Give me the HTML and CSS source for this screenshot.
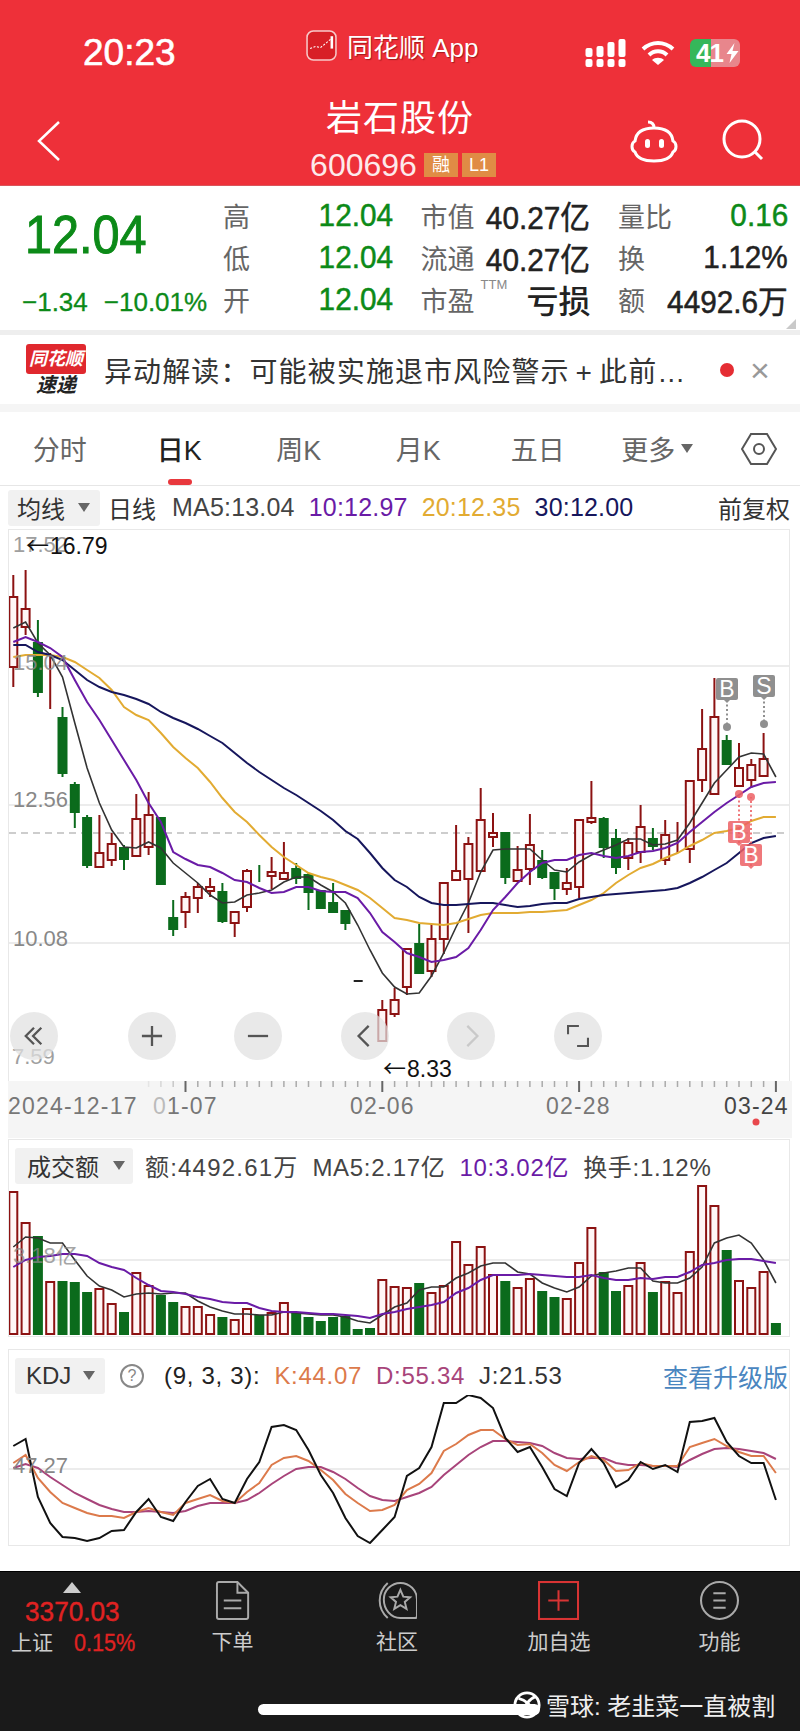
FILE: index.html
```html
<!DOCTYPE html>
<html lang="zh-CN">
<head>
    <meta charset="UTF-8">
    <meta name="viewport" content="width=device-width, initial-scale=1.0">
    <title>岩石股份 600696</title>
    <link rel="stylesheet" href="styles.css">
</head>
<body>
    <div class="page">
        <header class="top">
            <div class="status">
                <span class="time">20:23</span>
                <div class="app-tag">
                    <svg class="app-icon" viewBox="0 0 30 30">
                        <rect x="1" y="1" width="28" height="28" rx="6" fill="#d81f26" stroke="#f7c9c9" stroke-width="1.5"/>
                        <path d="M4 18l5-2 5 1 5-4 6-5" fill="none" stroke="#fff" stroke-width="1" stroke-dasharray="2 1.5"/>
                        <path d="M25 6v12" stroke="#fff" stroke-width="2.5"/>
                    </svg>
                    <span>同花顺 App</span>
                </div>
                <div class="status-icons">
                    <svg class="signal" viewBox="0 0 40 28" fill="#fff">
                        <rect x="0" y="9" width="7" height="9" rx="2"/>
                        <rect x="11" y="7" width="7" height="11" rx="2"/>
                        <rect x="22" y="3" width="7" height="15" rx="2"/>
                        <rect x="33" y="0" width="7" height="18" rx="2"/>
                        <rect x="0" y="20" width="7" height="8" rx="2"/>
                        <rect x="11" y="20" width="7" height="8" rx="2"/>
                        <rect x="22" y="20" width="7" height="8" rx="2"/>
                        <rect x="33" y="20" width="7" height="8" rx="2"/>
                    </svg>
                    <svg class="wifi" viewBox="0 0 34 26" fill="none" stroke="#fff" stroke-width="4">
                        <path d="M2 9c9-8 21-8 30 0"/>
                        <path d="M8 15c5-5 13-5 18 0"/>
                        <path d="M17 25l-6-5c3-3 9-3 12 0z" fill="#fff" stroke="none"/>
                    </svg>
                    <div class="battery">
                        <span class="battery-num">41</span>
                        <svg class="bolt" viewBox="0 0 12 20"><path d="M8 0L0 11h5l-2 9 9-12H6z" fill="#fff"/></svg>
                    </div>
                </div>
            </div>
            <div class="nav">
                <svg class="back" viewBox="0 0 24 40" fill="none" stroke="#fff" stroke-width="2.5"><path d="M22 1L2 20l20 19"/></svg>
                <div class="title-block">
                    <div class="title">岩石股份</div>
                    <div class="code-row">
                        <span class="code">600696</span>
                        <span class="badge">融</span>
                        <span class="badge">L1</span>
                    </div>
                </div>
                <div class="nav-actions">
                    <svg class="robot" viewBox="0 0 48 44" fill="none" stroke="#fff" stroke-width="3">
                        <path d="M24 9C11 9 6 14 5 22c-4 2-4 9 0 11 2 6 9 9 19 9s17-3 19-9c4-2 4-9 0-11-1-8-6-13-19-13z"/>
                        <path d="M24 9c0-4-2-6-6-6"/>
                        <rect x="15" y="20" width="5" height="9" rx="2.5" fill="#fff" stroke="none"/>
                        <rect x="29" y="20" width="5" height="9" rx="2.5" fill="#fff" stroke="none"/>
                    </svg>
                    <svg class="search" viewBox="0 0 42 42" fill="none" stroke="#fff" stroke-width="3">
                        <circle cx="20" cy="20" r="18"/>
                        <path d="M33 33l7 7"/>
                    </svg>
                </div>
            </div>
        </header>

        <section class="quote">
            <div class="price-block">
                <div class="price">12.04</div>
                <div class="change"><span>−1.34</span><span>−10.01%</span></div>
            </div>
            <div class="stat-grid">
                <div class="stat"><span class="stat-label">高</span><span class="stat-value down">12.04</span></div>
                <div class="stat"><span class="stat-label">市值</span><span class="stat-value">40.27亿</span></div>
                <div class="stat"><span class="stat-label">量比</span><span class="stat-value down">0.16</span></div>
                <div class="stat"><span class="stat-label">低</span><span class="stat-value down">12.04</span></div>
                <div class="stat"><span class="stat-label">流通</span><span class="stat-value">40.27亿</span></div>
                <div class="stat"><span class="stat-label">换</span><span class="stat-value">1.12%</span></div>
                <div class="stat"><span class="stat-label">开</span><span class="stat-value down">12.04</span></div>
                <div class="stat"><span class="stat-label">市盈<sup class="ttm">TTM</sup></span><span class="loss">亏损</span></div>
                <div class="stat"><span class="stat-label">额</span><span class="stat-value">4492.6万</span></div>
            </div>
        </section>

        <section class="notice">
            <div class="flash-logo">
                <span class="flash-top">同花顺</span>
                <span class="flash-bottom">速递</span>
            </div>
            <div class="notice-text">异动解读：可能被实施退市风险警示<span class="plus">+</span>此前…</div>
            <span class="notice-dot"></span>
            <span class="notice-close">×</span>
        </section>

        <nav class="tabs">
            <div class="tab">分时</div>
            <div class="tab active">日K</div>
            <div class="tab">周K</div>
            <div class="tab">月K</div>
            <div class="tab">五日</div>
            <div class="tab">更多<i class="caret"></i></div>
            <div class="tab">
                <svg class="hex" viewBox="0 0 36 32" fill="none" stroke="#555" stroke-width="2">
                    <path d="M10 1h16l9 15-9 15H10L1 16z"/>
                    <circle cx="18" cy="16" r="5"/>
                </svg>
            </div>
        </nav>

        <div class="ma-row">
            <div class="picker ma-picker">均线<i class="caret"></i></div>
            <span class="ma-period">日线</span>
            <span class="ma ma5">MA5:13.04</span>
            <span class="ma ma10">10:12.97</span>
            <span class="ma ma20">20:12.35</span>
            <span class="ma ma30">30:12.00</span>
            <span class="adjust">前复权</span>
        </div>

        <div class="panel price-panel">
            <svg id="price-chart" class="chart" viewBox="9 530 780 550" width="780" height="550"></svg>
            <div class="pan-buttons">
                <div class="pan-btn first">
                    <svg viewBox="0 0 24 24"><path d="M12 3L3 12l9 9M20 3l-9 9 9 9"/></svg>
                </div>
                <div class="pan-btn"><svg viewBox="0 0 24 24"><path d="M1 12h22M12 1v22"/></svg></div>
                <div class="pan-btn"><svg viewBox="0 0 24 24"><path d="M1 12h22"/></svg></div>
                <div class="pan-btn"><svg viewBox="0 0 24 24"><path d="M16 1L5 12l11 11"/></svg></div>
                <div class="pan-btn off"><svg viewBox="0 0 24 24"><path d="M8 1l11 11L8 23"/></svg></div>
                <div class="pan-btn"><svg viewBox="0 0 24 24"><path d="M1 10V1h12M23 14v9H11"/></svg></div>
            </div>
        </div>
        <svg id="date-axis" class="date-axis" viewBox="8 1081 784 57" width="784" height="57"></svg>

        <div class="panel vol-panel">
            <div class="panel-head">
                <div class="picker vol-picker">成交额<i class="caret"></i></div>
                <span class="ind ind-wide">额:4492.61万</span>
                <span class="ind">MA5:2.17亿</span>
                <span class="ind ma10">10:3.02亿</span>
                <span class="ind">换手:1.12%</span>
            </div>
            <svg id="vol-chart" class="chart" viewBox="9 1185 780 151" width="780" height="151"></svg>
        </div>

        <div class="panel kdj-panel">
            <div class="panel-head">
                <div class="picker kdj-picker">KDJ<i class="caret"></i></div>
                <span class="help">?</span>
                <span class="ind kdj-params">(9, 3, 3):</span>
                <span class="ind kdj-k">K:44.07</span>
                <span class="ind kdj-d">D:55.34</span>
                <span class="ind kdj-j">J:21.53</span>
                <span class="upgrade">查看升级版</span>
            </div>
            <svg id="kdj-chart" class="chart" viewBox="9 1395 780 149" width="780" height="149"></svg>
        </div>

        <footer class="bottom">
            <div class="index-block">
                <i class="index-arrow"></i>
                <div class="index-value">3370.03</div>
                <div class="index-row"><span class="index-name">上证</span><span class="index-pct">0.15%</span></div>
            </div>
            <div class="bottom-tab">
                <svg viewBox="0 0 36 40" fill="none" stroke="#aaa" stroke-width="2">
                    <path d="M2 3a2 2 0 0 1 2-2h19l11 11v25a2 2 0 0 1-2 2H4a2 2 0 0 1-2-2z"/>
                    <path d="M23 1v11h11M9 20h18M9 28h18"/>
                </svg>
                <span>下单</span>
            </div>
            <div class="bottom-tab">
                <svg viewBox="0 0 42 40" fill="none" stroke="#aaa" stroke-width="2">
                    <path d="M11 2C0 12 0 28 11 38"/>
                    <path d="M7 19a17 17 0 0 1 34 0v17a2 2 0 0 1-2 2H24C14 38 7 29 7 19z"/>
                    <path d="M24 9l3 7 7 .7-5.5 4.8 1.8 7.1-6.3-3.8-6.3 3.8 1.8-7.1L14 16.700l7-.7z"/>
                </svg>
                <span>社区</span>
            </div>
            <div class="bottom-tab">
                <svg viewBox="0 0 40 38" fill="none" stroke="#d83434" stroke-width="2">
                    <rect x="1" y="1" width="38" height="36"/>
                    <path d="M20 9v20M10 19h20"/>
                </svg>
                <span>加自选</span>
            </div>
            <div class="bottom-tab">
                <svg viewBox="0 0 38 38" fill="none" stroke="#aaa" stroke-width="2">
                    <circle cx="19" cy="19" r="18"/>
                    <path d="M13 12h12M13 19h12M13 26h12"/>
                </svg>
                <span>功能</span>
            </div>
            <div class="home-bar"></div>
            <div class="watermark">
                <svg viewBox="0 0 30 30" fill="none" stroke="#fff" stroke-width="3">
                    <circle cx="15" cy="15" r="13"/>
                    <path d="M6 8c8 2 14 8 18 16M24 6C18 8 12 16 9 24"/>
                </svg>
                <span>雪球: 老韭菜一直被割</span>
            </div>
        </footer>
    </div>
    <script src="chart.js"></script>
</body>
</html>
```

FILE: styles.css
```css
* {
    box-sizing: border-box;
}
body {
    margin: 0;
    background-color: #fff;
    font-family: "Liberation Sans", "Noto Sans CJK SC", sans-serif;
    color: #222;
}
.page {
    width: 800px;
    height: 1731px;
    overflow: hidden;
    position: relative;
}

/* red header */
.top {
    height: 186px;
    background-color: #ee3039;
    color: #fff;
    border-bottom: 1px solid #d9555b;
}
.status {
    height: 86px;
    display: grid;
    grid-template-columns: 306px 279px 1fr;
}
.time {
    padding: 33px 0 0 83px;
    font-size: 37px;
    line-height: 40px;
    -webkit-text-stroke: 0.6px #fff;
}
.app-tag {
    display: flex;
    align-items: center;
    height: 30px;
    margin-top: 30px;
    gap: 10px;
    font-size: 26px;
    text-shadow: 1px 1px 1px rgba(90, 0, 0, 0.5);
}
.app-icon {
    width: 31px;
    height: 31px;
}
.status-icons {
    display: flex;
    align-items: flex-start;
    padding-top: 39px;
}
.signal {
    width: 41px;
    height: 28px;
}
.wifi {
    width: 34px;
    height: 26px;
    margin: 1px 15px 0;
}
.battery {
    width: 50px;
    height: 28px;
    border-radius: 6px;
    background: linear-gradient(to right, #35b75a 21px, #e8868c 21px);
    display: flex;
    align-items: center;
    padding-left: 6px;
    gap: 3px;
}
.battery-num {
    font-size: 26px;
    font-weight: bold;
    letter-spacing: -1px;
}
.bolt {
    width: 13px;
    height: 20px;
}
.nav {
    height: 99px;
    display: grid;
    grid-template-columns: 1fr auto 1fr;
}
.back {
    width: 24px;
    height: 40px;
    margin: 35px 0 0 37px;
}
.title-block {
    padding-top: 12px;
    text-align: center;
}
.title {
    font-size: 36px;
    line-height: 42px;
    letter-spacing: 1px;
}
.code-row {
    display: flex;
    align-items: center;
    margin-top: 11px;
    gap: 4px;
    margin-left: 6px;
}
.code {
    font-size: 32px;
    line-height: 28px;
    opacity: 0.9;
    margin-right: 3px;
}
.badge {
    width: 34px;
    height: 24px;
    background-color: #e08c45;
    font-size: 18px;
    line-height: 24px;
    text-align: center;
}
.nav-actions {
    display: flex;
    justify-content: flex-end;
    align-items: flex-start;
    padding: 33px 36px 0 0;
    gap: 44px;
}
.robot {
    width: 48px;
    height: 44px;
}
.search {
    width: 42px;
    height: 42px;
}

/* quote */
.quote {
    position: relative;
    height: 149px;
    display: flex;
    border-bottom: 5px solid #eee;
}
.quote::after {
    content: "";
    position: absolute;
    right: 4px;
    bottom: 1px;
    border-left: 10px solid transparent;
    border-bottom: 10px solid #c9c9c9;
}
.price-block {
    width: 223px;
    padding: 25px 0 0 22px;
}
.price {
    font-size: 54px;
    line-height: 46px;
    color: #0c8a18;
    margin-left: 3px;
    -webkit-text-stroke: 1px #0c8a18;
    transform: scaleX(0.9);
    transform-origin: left;
}
.change {
    display: flex;
    gap: 16px;
    margin-top: 29px;
    font-size: 26px;
    line-height: 32px;
    color: #0c8a18;
    white-space: nowrap;
    -webkit-text-stroke: 0.3px #0c8a18;
}
.stat-grid {
    display: grid;
    grid-template-columns: repeat(3, 170px);
    grid-auto-rows: 42px;
    column-gap: 27.5px;
    padding-top: 8px;
}
.stat {
    display: flex;
    justify-content: space-between;
    align-items: center;
}
.stat-label {
    font-size: 27px;
    color: #666;
    white-space: nowrap;
    position: relative;
}
.ttm {
    position: absolute;
    left: 60px;
    top: -3px;
    font-size: 13px;
    line-height: 16px;
    color: #888;
}
.stat-value {
    font-size: 32px;
    white-space: nowrap;
    -webkit-text-stroke: 0.5px #222;
    transform: scaleX(0.93);
    transform-origin: right;
}
.stat-value.down {
    color: #0c8a18;
    -webkit-text-stroke: 0.5px #0c8a18;
}
.loss {
    font-size: 32px;
    font-weight: 500;
}

/* notice strip */
.notice {
    height: 77px;
    display: flex;
    align-items: center;
    padding-left: 26px;
    border-bottom: 8px solid #f5f5f5;
}
.flash-logo {
    width: 60px;
    display: flex;
    flex-direction: column;
    align-items: center;
    margin-right: 18px;
}
.flash-top {
    width: 60px;
    height: 30px;
    background-color: #e0282e;
    border-radius: 3px;
    color: #fff;
    font-size: 18px;
    font-style: italic;
    font-weight: bold;
    line-height: 30px;
    text-align: center;
    white-space: nowrap;
}
.flash-bottom {
    font-size: 20px;
    font-style: italic;
    font-weight: bold;
    line-height: 22px;
}
.notice-text {
    width: 600px;
    font-size: 28px;
    letter-spacing: 1.1px;
    white-space: nowrap;
    color: #333;
}
.plus {
    margin: 0 6px;
}
.notice-dot {
    width: 14px;
    height: 14px;
    border-radius: 50%;
    background-color: #e52d33;
    margin-left: 16px;
}
.notice-close {
    font-size: 34px;
    line-height: 34px;
    color: #999;
    margin-left: 16px;
}

/* period tabs */
.tabs {
    height: 74px;
    display: grid;
    grid-template-columns: repeat(6, 119.5px) 83px;
    border-bottom: 1px solid #e6e6e6;
}
.tab {
    position: relative;
    display: flex;
    align-items: center;
    justify-content: center;
    font-size: 27px;
    color: #666;
}
.tab.active {
    color: #222;
    font-weight: 500;
}
.tab.active::after {
    content: "";
    position: absolute;
    left: 48px;
    bottom: 0;
    width: 24px;
    height: 6px;
    border-radius: 3px;
    background-color: #e8383d;
}
.hex {
    width: 36px;
    height: 32px;
}
.caret {
    display: inline-block;
    width: 0;
    height: 0;
    margin-left: 6px;
    border-left: 6px solid transparent;
    border-right: 6px solid transparent;
    border-top: 9px solid #666;
}

/* moving average legend */
.ma-row {
    height: 43px;
    display: flex;
    align-items: center;
    padding: 0 10px 0 8px;
    white-space: nowrap;
}
.picker {
    height: 36px;
    display: flex;
    align-items: center;
    background-color: #f1f1f1;
    border-radius: 3px;
    font-size: 24px;
    color: #333;
}
.ma-picker {
    width: 92px;
    padding-left: 9px;
    justify-content: space-between;
    padding-right: 10px;
}
.ma-period {
    margin: 0 16px 0 8px;
    font-size: 24px;
    color: #333;
}
.ma {
    font-size: 25px;
    letter-spacing: 0.2px;
    margin-right: 14px;
}
.ma5 {
    color: #444;
}
.ma10 {
    color: #6a1ba6;
}
.ma20 {
    color: #e2ab32;
}
.ma30 {
    color: #16165c;
}
.adjust {
    margin-left: auto;
    font-size: 24px;
    color: #333;
}

/* chart panels */
.panel {
    position: relative;
    margin: 0 10px 0 8px;
    border: 1px solid #e8e8e8;
}
.chart {
    display: block;
}
.price-panel {
    height: 552px;
    border-bottom: none;
}
.pan-buttons {
    position: absolute;
    left: 1px;
    top: 482px;
    display: flex;
    gap: 58.5px;
}
.pan-btn {
    width: 48px;
    height: 48px;
    border-radius: 50%;
    background-color: rgba(224, 224, 224, 0.72);
    display: flex;
    align-items: center;
    justify-content: center;
}
.pan-btn.first {
    margin-right: 11px;
}
.pan-btn svg {
    width: 22px;
    height: 22px;
    fill: none;
    stroke: #555;
    stroke-width: 2.5;
}
.pan-btn.off svg {
    stroke: #c9c9c9;
}
.date-axis {
    display: block;
    margin-left: 8px;
    background-color: #f5f5f5;
}
.vol-panel {
    height: 198px;
    margin-top: 1px;
}
.kdj-panel {
    height: 197px;
    margin-top: 12px;
}
.panel-head {
    height: 45px;
    display: flex;
    align-items: center;
    padding: 6px 0 0 6px;
    white-space: nowrap;
}
.vol-picker {
    width: 118px;
    padding: 0 8px 0 12px;
    justify-content: space-between;
    margin-right: 12px;
}
.kdj-picker {
    width: 90px;
    padding: 0 10px 0 11px;
    justify-content: space-between;
    margin-right: 15px;
}
.ind {
    font-size: 24px;
    letter-spacing: 0.7px;
    color: #444;
    margin-right: 14px;
}
.ind-wide {
    letter-spacing: 1.2px;
}
.ind.ma10 {
    color: #6a1ba6;
}
.help {
    width: 24px;
    height: 24px;
    border: 2px solid #888;
    border-radius: 50%;
    font-size: 16px;
    line-height: 20px;
    text-align: center;
    color: #888;
    margin-right: 20px;
}
.kdj-params {
    color: #222;
}
.kdj-k {
    color: #dc7a4b;
}
.kdj-d {
    color: #a8447a;
}
.kdj-j {
    color: #333;
}
.upgrade {
    margin-left: auto;
    padding-right: 1px;
    font-size: 25px;
    color: #4a86c0;
}

/* svg chart text */
.axis-text {
    fill: #888;
    font-size: 22px;
}
.extreme-text {
    fill: #111;
    font-size: 23px;
}
.extreme-arrow {
    font-family: "Noto Sans CJK SC", sans-serif;
}
.marker-text {
    fill: #fff;
    font-size: 23px;
    text-anchor: middle;
}
.date-text {
    fill: #777;
    font-size: 23px;
    letter-spacing: 1.2px;
}
.date-text.current {
    fill: #444;
}

/* bottom bar */
.bottom {
    position: absolute;
    left: 0;
    top: 1571px;
    width: 800px;
    height: 160px;
    display: grid;
    grid-template-columns: 150px 165px 164px 160px 161px;
    align-items: start;
    background-color: #1a1a1a;
    border-top: 1px solid #000;
    color: #ccc;
}
.index-block {
    padding: 10px 0 0 11px;
}
.index-arrow {
    display: block;
    width: 0;
    height: 0;
    margin: 0 0 5px 52px;
    border-left: 9px solid transparent;
    border-right: 9px solid transparent;
    border-bottom: 11px solid #ccc;
}
.index-value {
    margin-left: 14px;
    font-size: 27px;
    line-height: 28px;
    color: #e02222;
    -webkit-text-stroke: 0.4px #e02222;
    white-space: nowrap;
    transform: scaleX(0.97);
    transform-origin: left;
}
.index-row {
    display: flex;
    align-items: center;
    margin-top: 3px;
    font-size: 21px;
    line-height: 28px;
}
.index-pct {
    margin-left: 21px;
    color: #e02222;
    font-size: 24px;
    -webkit-text-stroke: 0.3px #e02222;
    transform: scaleX(0.9);
    transform-origin: left;
}
.bottom-tab {
    display: flex;
    flex-direction: column;
    align-items: center;
    font-size: 21px;
    padding-top: 9px;
}
.bottom-tab svg {
    height: 39px;
    margin-bottom: 5px;
}
.home-bar {
    position: absolute;
    left: 258px;
    top: 132px;
    width: 282px;
    height: 11px;
    border-radius: 6px;
    background-color: #fff;
}
.watermark {
    position: absolute;
    left: 513px;
    top: 115px;
    display: flex;
    align-items: center;
    gap: 5px;
    font-size: 24px;
    color: #eee;
    white-space: nowrap;
}
.watermark svg {
    width: 28px;
    height: 28px;
}
```

FILE: chart.js
```js
// x position of a candle
function xAt(i) {
    return 13.3 + 12.3 * i;
}

var RED = "#8c1212";
var GREEN = "#0b6b1c";

// colour, high, low, body top, body bottom
var candles = [
    ["r",575,687,597,667],["r",570,635,609,627],["g",620,697,643,692],["r",653,709,702,702],
    ["g",707,777,718,773],["g",782,828,785,812],["g",815,868,818,865],["r",815,867,853,867],
    ["r",833,866,844,860],["g",845,870,848,859],["r",794,856,819,856],["r",792,855,815,847],
    ["g",818,884,818,884],["g",900,936,918,929],["r",892,928,897,912],["r",883,913,887,898],
    ["r",878,897,887,891],["g",883,923,892,921],["r",912,937,912,923],["r",869,912,871,907],
    ["g",865,882,876,876],["r",857,889,872,876],["r",842,880,873,879],["g",863,884,869,878],
    ["g",873,910,875,892],["g",891,908,891,908],["g",883,912,903,912],["g",911,930,911,923],
    ["k",981,981,981,981],["g",1033,1033,1033,1033],["r",1000,1041,1010,1041],["r",988,1017,1000,1014],
    ["r",949,995,949,987],["g",924,974,944,973],["r",924,977,939,971],["r",883,954,883,939],
    ["r",825,880,871,880],["r",837,933,844,879],["r",788,871,820,871],["r",813,847,833,837],
    ["g",833,884,833,877],["r",846,881,870,881],["r",814,885,845,869],["g",850,879,861,877],
    ["g",873,900,873,888],["r",868,895,883,889],["r",820,898,820,887],["r",781,824,818,822],
    ["g",817,858,819,847],["g",829,874,839,867],["r",838,870,843,858],["r",805,863,827,852],
    ["g",828,850,839,846],["r",820,865,835,860],["r",822,853,847,847],["r",781,863,781,849],
    ["r",709,792,749,780],["r",678,794,717,794],["g",735,764,741,764],["r",743,786,768,786],
    ["r",759,788,765,780],["r",733,776,759,776],["g",833,833,833,833]
];

var priceLines = [
    {color: "#333", width: 1.6, ys: [628,622,643,655,677,723,768,803,830,847,848,842,848,863,873,883,895,903,902,895,893,890,882,877,877,885,892,903,925,950,973,987,994,993,976,953,927,903,872,850,849,849,849,860,870,872,862,855,850,845,839,839,845,844,840,823,803,783,770,757,753,754,777]},
    {color: "#e2ab32", width: 2, ys: [657,655,655,655,657,662,670,678,690,707,715,720,733,747,758,768,782,798,812,822,835,847,857,865,873,877,880,885,890,898,908,918,920,923,924,925,923,919,915,913,913,913,912,912,911,910,905,900,893,883,875,868,864,858,853,846,840,833,831,828,821,817,817]},
    {color: "#16165c", width: 2, ys: [645,645,652,655,660,670,680,687,692,695,699,704,712,718,723,729,736,743,753,763,772,780,788,795,803,811,820,831,839,853,868,880,887,897,903,905,905,904,903,903,905,907,906,904,903,903,899,897,895,894,893,892,891,890,888,883,877,870,863,853,843,838,836]},
    {color: "#6a1ba6", width: 2, ys: [642,637,642,648,657,680,702,720,740,760,780,803,822,852,859,865,867,873,880,882,888,893,892,887,887,891,892,892,898,913,932,942,953,957,962,960,957,948,930,910,897,883,872,863,860,860,855,853,856,858,856,852,851,848,843,832,822,812,803,795,787,783,782]}
];

// y of the bar tops
var volumes = [1192,1223,1236,1282,1281,1282,1292,1289,1304,1312,1273,1286,1295,1302,1307,1307,1315,1317,1320,1309,1315,1313,1303,1313,1317,1321,1317,1316,1329,1328,1280,1287,1288,1283,1293,1286,1242,1265,1247,1275,1281,1288,1279,1291,1297,1299,1263,1228,1272,1291,1286,1263,1292,1282,1293,1252,1186,1206,1250,1281,1288,1272,1323];

var volLines = [
    {color: "#333", width: 1.6, ys: [1247,1237,1238,1243,1243,1260,1276,1286,1290,1297,1294,1293,1294,1293,1293,1301,1307,1311,1314,1314,1315,1315,1312,1313,1314,1315,1315,1317,1321,1323,1315,1307,1303,1290,1287,1287,1278,1273,1266,1263,1263,1272,1274,1283,1288,1292,1287,1276,1273,1271,1268,1268,1281,1283,1283,1278,1267,1243,1238,1235,1243,1260,1283]},
    {color: "#6a1ba6", width: 2, ys: [1267,1260,1257,1256,1254,1254,1256,1263,1267,1270,1278,1285,1291,1292,1294,1297,1299,1302,1303,1303,1308,1311,1312,1312,1313,1314,1314,1315,1316,1318,1314,1312,1309,1307,1305,1302,1293,1288,1280,1275,1275,1275,1274,1275,1276,1277,1277,1275,1278,1280,1280,1278,1279,1277,1277,1272,1265,1263,1260,1259,1259,1261,1263]}
];

var kdjLines = [
    {color: "#a8447a", width: 2, ys: [1468,1464,1468,1477,1485,1493,1499,1505,1509,1512,1512,1511,1512,1513,1511,1506,1503,1503,1503,1500,1493,1484,1476,1469,1467,1467,1472,1479,1488,1496,1500,1501,1497,1493,1487,1475,1465,1455,1447,1441,1441,1442,1443,1446,1453,1458,1459,1458,1458,1463,1465,1465,1466,1466,1467,1460,1454,1449,1448,1449,1451,1453,1459]},
    {color: "#dc7a4b", width: 2, ys: [1463,1455,1478,1492,1503,1508,1513,1516,1516,1518,1512,1508,1512,1515,1503,1499,1495,1501,1503,1492,1483,1465,1458,1456,1461,1470,1480,1494,1503,1511,1510,1505,1490,1484,1473,1451,1444,1435,1430,1430,1439,1445,1444,1453,1465,1471,1462,1456,1460,1471,1470,1463,1466,1466,1466,1447,1443,1439,1446,1452,1456,1456,1473]},
    {color: "#111", width: 2, ys: [1446,1439,1497,1523,1537,1538,1541,1538,1531,1530,1512,1499,1517,1521,1502,1486,1479,1499,1503,1479,1462,1427,1425,1430,1450,1475,1493,1518,1536,1543,1530,1517,1476,1468,1447,1403,1403,1395,1398,1408,1438,1452,1447,1467,1489,1496,1463,1449,1463,1487,1480,1462,1469,1465,1472,1422,1421,1418,1442,1456,1463,1463,1500]}
];

function polyline(line) {
    var pts = line.ys.map(function (y, i) {
        return xAt(i) + "," + y;
    }).join(" ");
    return '<polyline fill="none" stroke="' + line.color + '" stroke-width="' + line.width + '" points="' + pts + '"/>';
}

function hLine(y, x1, x2) {
    return '<path d="M' + x1 + ' ' + y + 'H' + x2 + '" stroke="#e6e6e6" stroke-width="1.5"/>';
}

function drawCandle(c, i) {
    var x = xAt(i);
    if (c[0] == "k") {
        return '<path d="M' + (x - 4) + ' ' + c[1] + 'h9" stroke="#222" stroke-width="2"/>';
    }
    var color = c[0] == "r" ? RED : GREEN;
    var s = '<path d="M' + x + ' ' + c[1] + 'V' + c[2] + '" stroke="' + color + '" stroke-width="2"/>';
    var fill = c[0] == "r" ? "#fff6f6" : GREEN;
    s += '<rect x="' + (x - 4) + '" y="' + c[3] + '" width="8" height="' + (c[4] - c[3]) + '" fill="' + fill + '" stroke="' + color + '" stroke-width="2"/>';
    return s;
}

function marker(x, y, label, color, dotY) {
    var s = '<path d="M' + x + ' ' + (y + 11) + 'V' + dotY + '" stroke="' + color + '" stroke-width="2" stroke-dasharray="2 2.5"/>';
    s += '<circle cx="' + x + '" cy="' + dotY + '" r="4" fill="' + color + '"/>';
    s += '<rect x="' + (x - 11) + '" y="' + (y - 11) + '" width="22" height="22" rx="2" fill="' + color + '"/>';
    s += '<path d="M' + (x - 3) + ' ' + (y + 11) + 'L' + x + ' ' + (y + 14) + 'L' + (x + 3) + ' ' + (y + 11) + 'z" fill="' + color + '"/>';
    s += '<text class="marker-text" x="' + x + '" y="' + (y + 8) + '">' + label + '</text>';
    return s;
}

function axisText(x, y, label, opacity) {
    return '<text class="axis-text" x="' + x + '" y="' + y + '" opacity="' + (opacity || 1) + '">' + label + '</text>';
}

function extremeText(x, y, label) {
    var s = '<text class="extreme-text extreme-arrow" x="' + x + '" y="' + y + '">←</text>';
    s += '<text class="extreme-text" x="' + (x + 24) + '" y="' + y + '">' + label + '</text>';
    return s;
}

function drawPrice() {
    var s = hLine(666, 9, 789) + hLine(805, 9, 789) + hLine(943, 9, 789);
    s += '<path d="M9 833H789" stroke="#bdbdbd" stroke-width="1.5" stroke-dasharray="7 5"/>';
    s += candles.map(drawCandle).join("");
    s += priceLines.map(polyline).join("");
    s += marker(727, 689, "B", "#8f8f8f", 727);
    s += marker(764, 686, "S", "#8f8f8f", 724);
    // red markers point up from the box to the dot
    s += marker(739, 832, "B", "rgba(236,96,100,0.85)", 794);
    s += marker(751, 855, "B", "rgba(236,96,100,0.85)", 797);
    s += axisText(13, 552, "17.52", 0.8) + axisText(13, 670, "15.04", 0.85) + axisText(13, 807, "12.56");
    s += axisText(13, 946, "10.08") + axisText(12, 1064, "7.59", 0.8);
    s += extremeText(26, 554, "16.79");
    s += extremeText(383, 1077, "8.33");
    document.getElementById("price-chart").innerHTML = s;
}

function drawAxis() {
    var s = "";
    for (var i = 11; i < 63; i++) {
        var major = i == 14 || i == 30 || i == 46 || i == 62;
        var o = i < 14 ? (i - 10) * 0.2 : 1;
        s += '<path d="M' + xAt(i) + ' 1081v' + (major ? 11 : 6) + '" stroke="' + (major ? "#666" : "#aaa") + '" stroke-width="' + (major ? 2 : 1.5) + '" opacity="' + o + '"/>';
    }
    s += '<text class="date-text" x="8" y="1114">2024-12-17</text>';
    s += '<text class="date-text" x="153" y="1114"><tspan fill="#bbb">0</tspan>1-07</text>';
    s += '<text class="date-text" x="350" y="1114">02-06</text>';
    s += '<text class="date-text" x="546" y="1114">02-28</text>';
    s += '<text class="date-text current" x="724" y="1114">03-24</text>';
    s += '<circle cx="756" cy="1122" r="3.5" fill="#e8484d"/>';
    document.getElementById("date-axis").innerHTML = s;
}

function drawVolume() {
    var s = hLine(1260, 9, 789);
    volumes.forEach(function (top, i) {
        var x = xAt(i);
        if (candles[i][0] == "r") {
            s += '<rect x="' + (x - 4) + '" y="' + top + '" width="8" height="' + (1334 - top) + '" fill="#fff6f6" stroke="' + RED + '" stroke-width="2"/>';
        } else {
            s += '<rect x="' + (x - 5) + '" y="' + top + '" width="10" height="' + (1335 - top) + '" fill="' + GREEN + '"/>';
        }
    });
    s += volLines.map(polyline).join("");
    s += axisText(13, 1263, "3.18亿", 0.75);
    document.getElementById("vol-chart").innerHTML = s;
}

function drawKdj() {
    var s = hLine(1469, 9, 789);
    s += kdjLines.map(polyline).join("");
    s += axisText(13, 1473, "47.27");
    document.getElementById("kdj-chart").innerHTML = s;
}

drawPrice();
drawAxis();
drawVolume();
drawKdj();
```
